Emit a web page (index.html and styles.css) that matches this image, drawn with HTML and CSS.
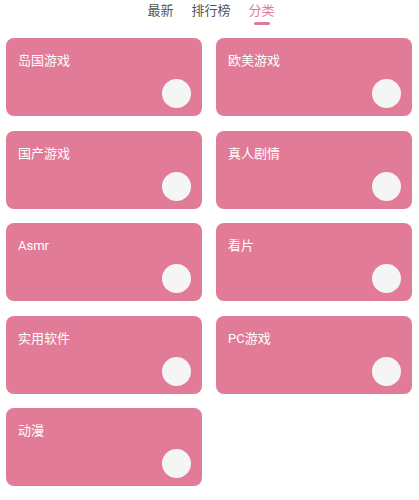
FILE: index.html
```html
<!DOCTYPE html>
<html lang="zh">

<head>
    <meta charset="UTF-8">
    <meta name="viewport" content="width=device-width, initial-scale=1.0">
    <title>分类</title>
    <link rel="stylesheet" href="styles.css">
</head>

<body>
    <!-- Top tabs -->
    <div class="tabs">
        <span class="tab">最新</span>
        <span class="tab">排行榜</span>
        <span class="tab active">分类</span>
    </div>

    <!-- Category cards -->
    <div class="grid">
        <div class="card"><span class="name">岛国游戏</span><span class="dot"></span></div>
        <div class="card"><span class="name">欧美游戏</span><span class="dot"></span></div>
        <div class="card"><span class="name">国产游戏</span><span class="dot"></span></div>
        <div class="card"><span class="name">真人剧情</span><span class="dot"></span></div>
        <div class="card"><span class="name">Asmr</span><span class="dot"></span></div>
        <div class="card"><span class="name">看片</span><span class="dot"></span></div>
        <div class="card"><span class="name">实用软件</span><span class="dot"></span></div>
        <div class="card"><span class="name">PC游戏</span><span class="dot"></span></div>
        <div class="card"><span class="name">动漫</span><span class="dot"></span></div>
    </div>
</body>

</html>
```

FILE: styles.css
```css
body {
    margin: 0px;
    padding: 0px;
    background: #fff;
    font-family: Roboto, "Noto Sans CJK SC", sans-serif;
}

.tabs {
    height: 38px;
    display: flex;
    justify-content: center;
    gap: 18px;
    box-sizing: border-box;
    padding-top: 2px;
    padding-left: 3px;
}

.tab {
    font-size: 13px;
    line-height: 18px;
    color: #555;
    position: relative;
    height: 24px;
}

.tab.active {
    color: #e07a97;
}

.tab.active::after {
    content: "";
    position: absolute;
    left: 5px;
    right: 5px;
    bottom: 1px;
    height: 3px;
    border-radius: 2px;
    background: #e07a97;
}

.grid {
    display: grid;
    grid-template-columns: 196px 196px;
    column-gap: 14px;
    row-gap: 14.5px;
    padding: 0px 7px 0px 6px;
}

.card {
    height: 78px;
    background: #e17b97;
    border-radius: 8px;
    display: flex;
    flex-direction: column;
    justify-content: space-between;
    align-items: flex-start;
    padding: 14px 11px 8px 12px;
    box-sizing: border-box;
}

.name {
    color: #fff;
    font-size: 13px;
    line-height: 17px;
}

.dot {
    align-self: flex-end;
    width: 29px;
    height: 29px;
    border-radius: 50%;
    background: #f5f5f5;
}
```
